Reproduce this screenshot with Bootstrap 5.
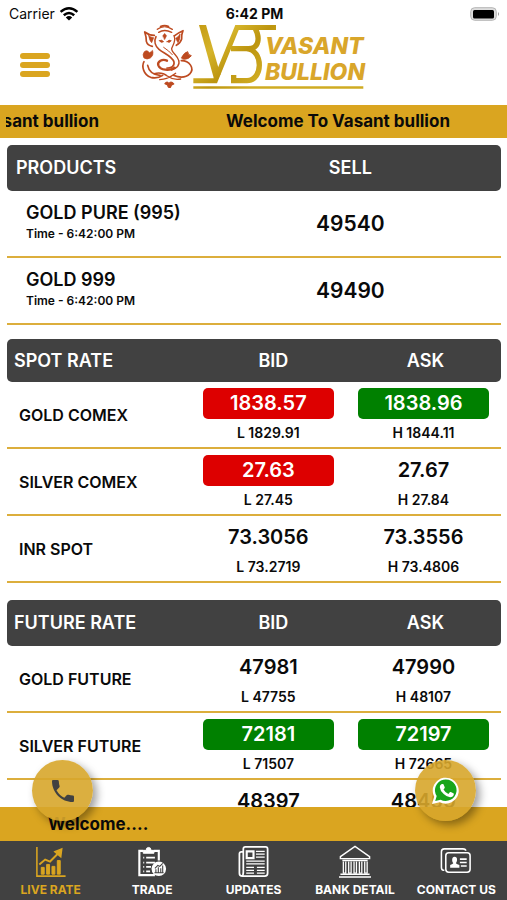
<!DOCTYPE html>
<html lang="en">
<head>
<meta charset="utf-8">
<meta name="viewport" content="width=device-width, initial-scale=1">
<title>Vasant Bullion</title>
<link href="https://cdn.jsdelivr.net/npm/bootstrap@5.3.0/dist/css/bootstrap.min.css" rel="stylesheet">
<style>
:root { --gold: #daa520; --slate: #414141; }
body { font-family: Inter, "Liberation Sans", sans-serif; color: #0a0a0a; background: #fff; }
.status-bar { height: 24px; padding: 4px 7px 0 9px; font-size: 14px; line-height: 20px; }
.status-bar > * { flex: 1 1 0; }
.brand-bar { height: 81px; padding: 0 20px; }
.brand-bar > * { flex: 1 1 0; }
.brand-bar > .brand-logo { flex: 0 0 232px; }
.menu-btn { width: 30px; height: 24px; }
.menu-btn span { height: 6px; border-radius: 3px; background: var(--gold); }
.gold-strip { background: var(--gold); font-size: 17px; font-weight: 700; line-height: 33px; white-space: nowrap; }
.welcome-run { margin-left: 6px; padding-right: 57px; gap: 127px; overflow: hidden; }
.rates { padding: 7px 6px 0 7px; overflow: hidden; min-height: 0; }
.rate-table { width: 100%; table-layout: fixed; border-collapse: separate; border-spacing: 0; }
.rate-table + .rate-table { margin-top: 14px; }
.rate-table.future { margin-top: 17px; }
.rate-table .c-quote { width: 31.4%; }
.rate-table .c-sell { width: 61%; }
.rate-table thead th { background: var(--slate); color: #fff; height: 46px; font-size: 18px; font-weight: 600; line-height: 24px; padding: 0 0 0 10px; text-align: center; vertical-align: middle; }
.rate-table.spot thead th { height: 43px; }
.rate-table thead th:first-child { text-align: left; border-radius: 5px 0 0 5px; padding-left: 7px; }
.rate-table thead th:last-child { border-radius: 0 5px 5px 0; padding-left: 4px; }
.rate-table.products thead th { padding-left: 9px; }
.rate-table.products thead th:last-child { padding-left: 0; }
.rate-table tbody th, .rate-table tbody td { height: 67px; border-bottom: 2px solid #dcae3c; vertical-align: middle; }
.rate-table tbody th { font-size: 16px; font-weight: 600; padding: 0 0 0 12px; }
.rate-table tbody td { text-align: center; padding: 6px 12px 0; }
.rate-table.products tbody th { font-size: 18px; line-height: 24px; padding: 0 0 4px 19px; }
.rate-table.products tbody td { font-size: 21px; font-weight: 600; padding: 0; }
.products .stamp { display: block; font-size: 12px; line-height: 18px; }
.quote { display: block; border-radius: 5px; font-size: 20px; font-weight: 600; line-height: 31px; }
.quote.down { background: #dd0000; color: #fff; }
.quote.up { background: #008000; color: #fff; }
.limit { display: block; font-size: 14px; font-weight: 600; line-height: 28px; }
.notice { line-height: 34px; padding-left: 48px; }
.call-fab { position: absolute; top: -47px; width: 61px; height: 61px; border-radius: 50%; background: rgba(215,166,43,.9); box-shadow: 4px 4px 9px rgba(0,0,0,.38); }
.call-fab.phone { left: 32px; }
.call-fab.chat { right: 31px; }
.tab-bar { background: var(--slate); height: 59px; padding-top: 4px; }
.tab-bar a { flex: 1 1 0; color: #fff; font-size: 12px; font-weight: 700; line-height: 20px; text-decoration: none; white-space: nowrap; }
.tab-bar a.active { color: var(--gold); }
.tab-bar svg { width: 36px; height: 36px; }
</style>
<script src="https://cdn.jsdelivr.net/npm/bootstrap@5.3.0/dist/js/bootstrap.bundle.min.js"></script>
</head>
<body class="vh-100 d-flex flex-column overflow-hidden">
<header>
  <div class="status-bar d-flex">
    <div class="d-flex gap-1 align-items-center"><span>Carrier</span>
      <svg width="20" height="14" viewBox="0 0 20 14" aria-hidden="true" fill="none" stroke="#000" stroke-width="2.5"><path d="M1.6 4.9Q10-2.3 18.4 4.9M4.8 8.3Q10 3.7 15.2 8.3"/><path d="M10 13.6L6.8 10.4Q10 7.8 13.2 10.4Z" fill="#000" stroke="none"/></svg>
    </div>
    <div class="fw-bold text-center">6:42 PM</div>
    <div class="d-flex justify-content-end align-items-center"><svg width="30" height="16" viewBox="0 0 30 16" aria-hidden="true"><rect x=".7" y="1.7" width="25.6" height="12.6" rx="4" fill="#ddd" stroke="#b5b5b5"/><rect x="3" y="4" width="21" height="8.5" rx="1.5"/><path d="M28 6q2 2 0 4z" fill="#999"/></svg></div>
  </div>
  <div class="brand-bar d-flex align-items-center">
    <div><button type="button" class="menu-btn btn p-0 border-0 d-flex flex-column justify-content-between" aria-label="Menu"><span class="w-100"></span><span class="w-100"></span><span class="w-100"></span></button></div>
    <svg class="brand-logo" width="232" height="81" viewBox="138 24 232 81" role="img" aria-label="Vasant Bullion">
      <defs><linearGradient id="metal" gradientUnits="userSpaceOnUse" x1="200" y1="30" x2="370" y2="205"><stop offset="0" stop-color="#c49a12"/><stop offset=".35" stop-color="#d5b42a"/><stop offset=".65" stop-color="#bd950f"/><stop offset="1" stop-color="#cfab22"/></linearGradient></defs>
      <g transform="translate(130 15) scale(.3333)">
        <g fill="none" stroke="#bd4a20" stroke-width="5" stroke-linecap="round" stroke-linejoin="round">
          <path d="M82 43Q103 27 127 43M86 52Q103 41 125 52M91 34Q104 28 116 34" stroke-width="4"/>
          <path d="M78 65C71 79 76 94 87 103C103 116 128 124 132 141C134 154 124 160 111 159"/>
          <path d="M132 62C140 78 127 92 125 101C125 113 142 121 146 136C151 151 139 161 125 165" stroke-width="4"/>
          <path d="M111 137C97 130 81 140 85 151C91 166 119 168 134 158" stroke-width="7"/>
          <path d="M101 97Q118 108 127 119" stroke-width="3"/>
          <path d="M88 77Q95 72 101 80Q93 86 88 77ZM111 80Q117 72 124 77Q119 86 111 80Z" fill="#bd4a20" stroke-width="2"/>
          <path d="M98 62l6-7 6 7-6 12z" fill="#bd4a20" stroke-width="1"/>
          <path d="M73 61Q57 61 44 51Q49 65 49 79Q52 91 67 94"/>
          <path d="M56 62Q62 67 71 68L65 83Q59 79 56 62Z" fill="#bd4a20" stroke-width="2"/>
          <path d="M134 62Q145 53 159 47Q154 59 155 72Q151 85 139 91"/>
          <path d="M150 58Q144 67 137 70L144 83Q151 74 150 58Z" fill="#bd4a20" stroke-width="2"/>
          <path d="M68 107Q72 121 61 129Q51 135 42 129Q36 119 43 110Q52 103 58 113Z" fill="#bd4a20" stroke-width="2"/>
          <path d="M155 127Q163 112 173 110Q173 120 184 122Q174 135 158 132Z" fill="#bd4a20" stroke-width="3"/>
          <path d="M42 140C34 154 41 180 62 187Q82 192 98 181M53 151Q58 178 90 181"/>
          <path d="M154 137C179 137 194 160 180 176Q162 194 130 181"/>
          <path d="M72 176Q96 170 112 183Q132 197 152 192M89 194Q112 194 137 175" stroke-width="4"/>
          <path d="M105 206Q112 196 117 207Q122 196 131 207Q124 206 121 217Q114 219 113 210Z" fill="#bd4a20" stroke-width="4"/>
        </g>
        <g fill="none" stroke="url(#metal)">
          <path d="M438 37.500H321L256 197H190" stroke-width="15"/>
          <path d="M207 30H228L271 178L259 201L251 188Z" fill="url(#metal)" stroke="none"/>
          <path d="M303 101H355C389 101 390 66 375 39M350 101C402 106 399 197 351 197H303M311 197V180" stroke-width="16"/>
          <path d="M190 217.500H700" stroke-width="8"/>
        </g>
      </g>
      <g font-family="Inter, sans-serif" font-weight="800" font-style="italic" font-size="23" fill="#d9a62b"><text x="265" y="54">VASANT</text><text x="265" y="80">BULLION</text></g>
    </svg>
    <div></div>
  </div>
  <div class="gold-strip"><div class="welcome-run d-flex justify-content-end"><span>Welcome To Vasant bullion</span><span>Welcome To Vasant bullion</span></div></div>
</header>
<main class="rates flex-grow-1">
  <table class="rate-table products">
    <colgroup><col><col class="c-sell"></colgroup>
    <thead><tr><th scope="col">PRODUCTS</th><th scope="col">SELL</th></tr></thead>
    <tbody>
      <tr><th scope="row">GOLD PURE (995)<span class="stamp">Time - 6:42:00 PM</span></th><td>49540</td></tr>
      <tr><th scope="row">GOLD 999<span class="stamp">Time - 6:42:00 PM</span></th><td>49490</td></tr>
    </tbody>
  </table>
  <table class="rate-table spot">
    <colgroup><col><col class="c-quote"><col class="c-quote"></colgroup>
    <thead><tr><th scope="col">SPOT RATE</th><th scope="col">BID</th><th scope="col">ASK</th></tr></thead>
    <tbody>
      <tr><th scope="row">GOLD COMEX</th><td><span class="quote down">1838.57</span><span class="limit">L 1829.91</span></td><td><span class="quote up">1838.96</span><span class="limit">H 1844.11</span></td></tr>
      <tr><th scope="row">SILVER COMEX</th><td><span class="quote down">27.63</span><span class="limit">L 27.45</span></td><td><span class="quote">27.67</span><span class="limit">H 27.84</span></td></tr>
      <tr><th scope="row">INR SPOT</th><td><span class="quote">73.3056</span><span class="limit">L 73.2719</span></td><td><span class="quote">73.3556</span><span class="limit">H 73.4806</span></td></tr>
    </tbody>
  </table>
  <table class="rate-table future">
    <colgroup><col><col class="c-quote"><col class="c-quote"></colgroup>
    <thead><tr><th scope="col">FUTURE RATE</th><th scope="col">BID</th><th scope="col">ASK</th></tr></thead>
    <tbody>
      <tr><th scope="row">GOLD FUTURE</th><td><span class="quote">47981</span><span class="limit">L 47755</span></td><td><span class="quote">47990</span><span class="limit">H 48107</span></td></tr>
      <tr><th scope="row">SILVER FUTURE</th><td><span class="quote up">72181</span><span class="limit">L 71507</span></td><td><span class="quote up">72197</span><span class="limit">H 72665</span></td></tr>
      <tr><td></td><td class="align-top"><span class="quote">48397</span></td><td class="align-top"><span class="quote">48450</span></td></tr>
    </tbody>
  </table>
</main>
<footer>
  <div class="gold-strip notice position-relative">Welcome....
    <a href="#call" class="call-fab phone d-flex align-items-center justify-content-center" aria-label="Call"><svg width="24" height="24" viewBox="0 0 24 24" fill="#414141"><path d="M2 1H6.500Q7.700 1 7.800 2.200Q7.900 5 8.600 7Q8.900 7.900 8.200 8.600L5.500 11.200Q8.500 16.500 13.300 18.800L15.900 16.100Q16.500 15.500 17.400 15.800Q19.500 16.500 21.900 16.500Q23 16.600 23 17.700V22Q23 23 21.800 23C10.500 23 1 13.500 1 2.200Q1 1 2 1Z"/></svg></a>
    <a href="#chat" class="call-fab chat d-flex align-items-center justify-content-center" aria-label="WhatsApp"><svg width="30" height="30" viewBox="0 0 30 30"><path d="M1 28L3.200 20.700A13 13 0 1 1 8.700 26.200Z" fill="#fff"/><path d="M4.200 24.900L5.700 20.100A10.800 10.800 0 1 1 9.600 23.700Z" fill="#18a51c"/><path d="M10.300 8.300q.6-.6 1.700-.3.500.1.700.7l1 2.500q.2.500-.2 1l-1 1.200q1.700 3.100 4.900 4.500l1.400-1.700q.4-.5 1-.2l2.600 1.300q.6.400.4 1.200-.7 2.700-3.600 2.700-3 .1-6.500-3.200-3.700-3.400-3.900-6.700-.1-1.900 1.500-3z" fill="#fff"/></svg></a>
  </div>
  <nav class="tab-bar d-flex text-center" aria-label="Main">
    <a href="#live" class="active d-flex flex-column align-items-center" aria-current="page"><svg viewBox="0 0 36 36" fill="none" stroke="currentColor" stroke-width="1.600"><path d="M3.500 2V32H33"/><path d="M6 20L12 15L17 17L26 8" stroke-width="2"/><path d="M22 7L29 4L28 12Z" fill="currentColor"/><path d="M8 23h3v7H8zM13.500 20h3v10h-3zM19 22h3v8h-3zM24.500 16h3v14h-3z" fill="currentColor" stroke-width="1"/></svg>LIVE RATE</a>
    <a href="#trade" class="d-flex flex-column align-items-center"><svg viewBox="0 0 36 36" fill="none" stroke="currentColor" stroke-width="2.200"><path d="M9 6H5V31H21M20 6H25V16"/><path d="M9 8.500V5.500H12Q12 2.500 14.500 2.500T17 5.500H20V8.500Z" fill="currentColor" stroke-width="1"/><path d="M9 13H10M12 13H21M9 18H10M12 18H21M9 22.500H10M12 22.500H17M9 27H10M12 27H16" stroke-width="1.800"/><circle cx="25" cy="24.500" r="7.500" fill="currentColor" stroke="none"/><path d="M20.500 28.500H30M22 28V25M24.500 28V23M27 28V24M29 28V21M21 24L24 21L26 22L29 19" stroke="#414141" stroke-width="1.100"/></svg>TRADE</a>
    <a href="#updates" class="d-flex flex-column align-items-center"><svg viewBox="0 0 36 36" fill="none" stroke="currentColor" stroke-width="1.800"><path d="M7 7H5Q3 7 3 9V29Q3 32 6 32H29Q32 32 32 29V4Q32 2 30 2H9Q7 2 7 4V28Q7 32 5 32"/><path d="M10.500 6.500H17.500V13.500H10.500Z" stroke-width="2.200"/><path d="M20 6.500H29M20 9.500H29M20 12.500H29M10 16.500H29M10 19.500H29M10 23H18M21 23H29M10 26H18M21 26H29M10 29H18M21 29H29" stroke-width="1.300"/></svg>UPDATES</a>
    <a href="#bank" class="d-flex flex-column align-items-center"><svg viewBox="0 0 36 36" fill="none" stroke="currentColor" stroke-width="1.500"><path d="M3 12L18 1.500L33 12V14H3ZM5 16H31M3 30H33M1.500 33H34.500"/><path d="M6 17V29H8.500V17M11.500 17V29H14V17M17 17V29H19.500V17M22.500 17V29H25V17M28 17V29H30.500V17" stroke-width="1.300"/></svg>BANK DETAIL</a>
    <a href="#contact" class="d-flex flex-column align-items-center"><svg viewBox="0 0 36 36" fill="none" stroke="currentColor" stroke-width="1.600"><path d="M6 26H5Q3 26 3 23V7Q3 4 6 4H25Q28 4 28 6"/><rect x="7.500" y="8" width="25" height="20" rx="3"/><path d="M16.500 12C20 12 19.500 17 17.800 18.500Q18 19.500 21.500 20.500V23.500H12V20.500Q15 19.500 15.300 18.500C13.500 17 13.500 12 16.500 12Z" fill="currentColor" stroke="none"/><path d="M22 14.500H29M22 18H29M23 21.500H29"/></svg>CONTACT US</a>
  </nav>
</footer>
</body>
</html>
